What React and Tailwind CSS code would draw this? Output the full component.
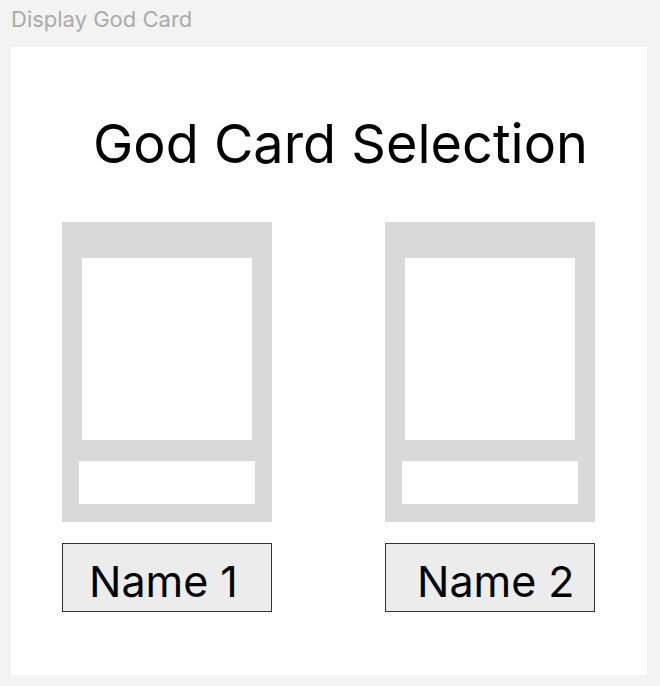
import React from 'react';

const cards = [
    { name: 'Name 1', pad: 'pl-[26px]' },
    { name: 'Name 2', pad: 'pl-[31px]' },
];

function GodCard({ name, pad }) {
    return (
        <div className="flex flex-col w-[210px]">
            <div className="bg-[#d9d9d9] h-[300px] flex flex-col items-center pt-[36px]">
                <div className="bg-white w-[170px] h-[182px]"></div>
                <div className="bg-white w-[176px] h-[43px] mt-[21px]"></div>
            </div>
            <div className={`mt-[21px] h-[69px] border border-[#333] bg-[#ececec] pt-[16px] ${pad}`}>
                <span className="block text-[43px] leading-none text-black">{name}</span>
            </div>
        </div>
    );
}

export default function App() {
    return (
        <div className="w-[660px] h-[686px] bg-[#f3f3f3] pl-[11px] pt-[6px] font-['Inter',sans-serif]">
            <div className="text-[22px] leading-[26px] text-[#ababab]">Display God Card</div>
            <div className="mt-[15px] w-[636px] h-[628px] bg-white flex flex-col">
                <h1 className="mt-[68px] pl-[82px] text-[54px] leading-[58px] text-black">God Card Selection</h1>
                <div className="mt-[49px] pl-[51px] flex gap-[113px]">
                    {cards.map((c) => (
                        <GodCard key={c.name} name={c.name} pad={c.pad} />
                    ))}
                </div>
            </div>
        </div>
    );
}
